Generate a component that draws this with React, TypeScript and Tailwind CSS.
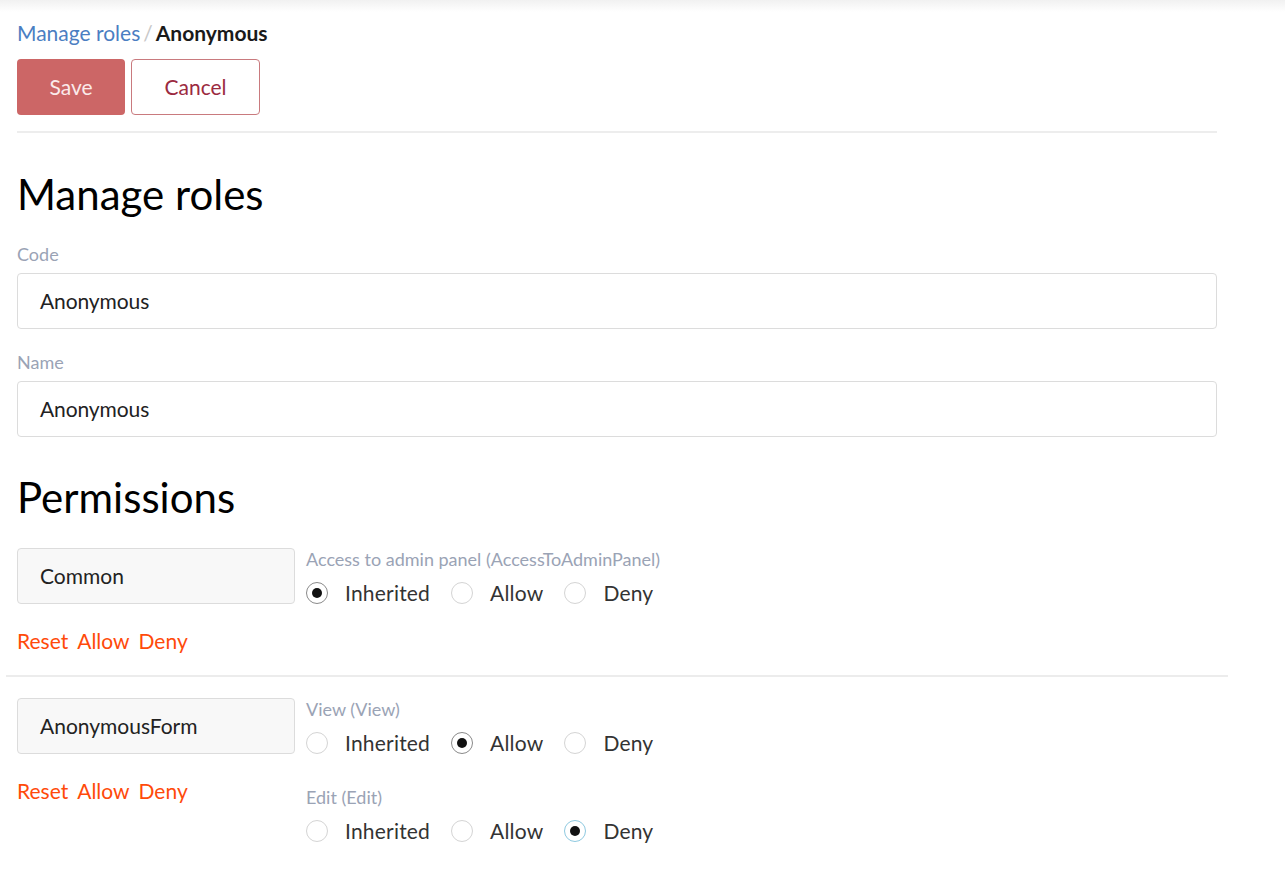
import React from "react";

type Choice = "Inherited" | "Allow" | "Deny";

interface Permission {
  label: string;
  value: Choice;
  focused?: boolean;
}

interface Group {
  name: string;
  permissions: Permission[];
}

const groups: Group[] = [
  {
    name: "Common",
    permissions: [
      { label: "Access to admin panel (AccessToAdminPanel)", value: "Inherited" },
    ],
  },
  {
    name: "AnonymousForm",
    permissions: [
      { label: "View (View)", value: "Allow" },
      { label: "Edit (Edit)", value: "Deny", focused: true },
    ],
  },
];

const choices: Choice[] = ["Inherited", "Allow", "Deny"];

function Radio({ checked, focused }: { checked: boolean; focused?: boolean }) {
  return (
    <span
      className={
        "flex h-[22px] w-[22px] shrink-0 items-center justify-center rounded-full border bg-white " +
        (focused
          ? "border-[#8ec9e0]"
          : checked
            ? "border-[#8a8a8a]"
            : "border-[#d4d4d4]")
      }
    >
      {checked ? <span className="h-[10px] w-[10px] rounded-full bg-[#111]" /> : null}
    </span>
  );
}

function Field({ label, value }: { label: string; value: string }) {
  return (
    <div>
      <div className="text-[18px] leading-[20px] text-[#9aa3b5]">{label}</div>
      <div className="mt-[9px] flex h-[56px] items-center rounded-[4px] border border-[#dcdcdc] px-[22px] text-[21px] tracking-[-0.1px] text-[#222]">
        {value}
      </div>
    </div>
  );
}

export default function App() {
  return (
    <div className="min-h-[895px] bg-white font-['Lato','Liberation_Sans',sans-serif] text-[#222]">
      <div className="h-3 bg-gradient-to-b from-[#f1f1f1] to-white" />
      <div className="w-[1234px] px-[17px]">
        <div className="mt-[7px] text-[21px] leading-[28px]">
          <span className="text-[#4b7ec2]">Manage roles</span>
          <span className="mx-[3px] text-[#c8c8c8]">/</span>
          <span className="font-bold text-[#1a1a1a]">Anonymous</span>
        </div>

        <div className="mt-[12px] flex gap-[6px]">
          <button
            type="button"
            className="h-[56px] w-[108px] rounded-[4px] bg-[#cc6666] text-[21px] text-[#fbeaea]"
          >
            Save
          </button>
          <button
            type="button"
            className="h-[56px] w-[129px] rounded-[4px] border border-[#c97a7e] bg-white text-[21px] text-[#9b2a3f]"
          >
            Cancel
          </button>
        </div>

        <div className="mt-[16px] h-[2px] bg-[#ededed]" />

        <h1 className="mt-[37px] text-[42px] leading-[48px] text-black">Manage roles</h1>

        <div className="mt-[26px] flex flex-col gap-[23px]">
          <Field label="Code" value="Anonymous" />
          <Field label="Name" value="Anonymous" />
        </div>

        <h1 className="mt-[36px] text-[42px] leading-[48px] text-black">Permissions</h1>

        <div className="mt-[27px]">
          {groups.map((group, gi) => (
            <div key={group.name}>
              {gi > 0 ? (
                <div className="-mx-[11px] mb-[21px] mt-[20px] h-[2px] bg-[#ececec]" />
              ) : null}
              <div className="flex gap-[11px]">
                <div className="w-[278px] shrink-0">
                  <div className="flex h-[56px] items-center rounded-[4px] border border-[#dcdcdc] bg-[#f8f8f8] px-[22px] text-[21px] text-[#222]">
                    {group.name}
                  </div>
                  <div className="mt-[23px] flex gap-[9px] text-[21px] leading-[28px] text-[#ff4a0a]">
                    <span>Reset</span>
                    <span>Allow</span>
                    <span>Deny</span>
                  </div>
                </div>
                <div className="flex flex-col gap-[30px] pt-px">
                  {group.permissions.map((p) => (
                    <div key={p.label}>
                      <div className="text-[18px] leading-[20px] text-[#9aa3b5]">{p.label}</div>
                      <div className="mt-[10px] flex items-center text-[21px] leading-[28px] tracking-[0.2px] text-[#333]">
                        {choices.map((c) => (
                          <label key={c} className="mr-[21px] flex items-center gap-[17px]">
                            <Radio checked={p.value === c} focused={p.focused && p.value === c} />
                            <span>{c}</span>
                          </label>
                        ))}
                      </div>
                    </div>
                  ))}
                </div>
              </div>
            </div>
          ))}
        </div>
      </div>
    </div>
  );
}
